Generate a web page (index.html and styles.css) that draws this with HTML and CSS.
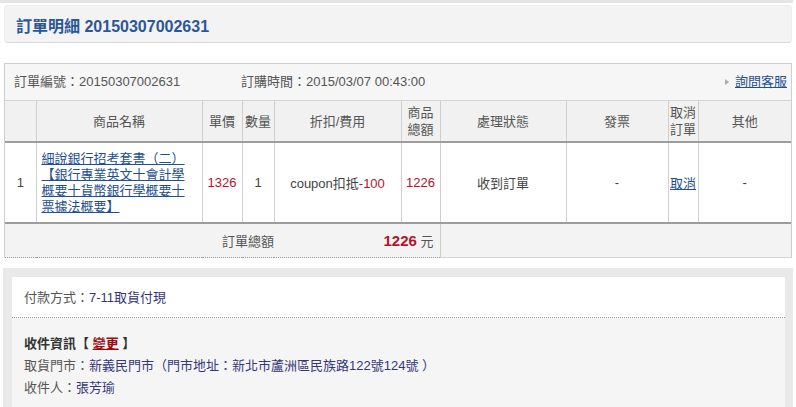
FILE: index.html
```html
<!DOCTYPE html>
<html>

<head>
    <meta name="viewport" content="width=device-width, initial-scale=1">
    <title>訂單明細</title>
    <link rel="stylesheet" href="styles.css">
</head>

<body>
    <div class="topbar"></div>
    <div class="page">
        <div class="title-box">
            <h1>訂單明細 20150307002631</h1>
        </div>

        <div class="order-box">
            <div class="order-info">
                <span>訂單編號：20150307002631</span>
                <span>訂購時間：2015/03/07 00:43:00</span>
                <a href="#" class="service"><i class="arrow"></i><u>詢問客服</u></a>
            </div>
            <table class="items">
                <colgroup>
                    <col style="width:31px">
                    <col style="width:166px">
                    <col style="width:40px">
                    <col style="width:32px">
                    <col style="width:127px">
                    <col style="width:39px">
                    <col style="width:126px">
                    <col style="width:102px">
                    <col style="width:30px">
                    <col>
                </colgroup>
                <thead>
                    <tr>
                        <th></th>
                        <th>商品名稱</th>
                        <th>單價</th>
                        <th>數量</th>
                        <th>折扣/費用</th>
                        <th>商品總額</th>
                        <th>處理狀態</th>
                        <th>發票</th>
                        <th>取消訂單</th>
                        <th>其他</th>
                    </tr>
                </thead>
                <tbody>
                    <tr class="item-row">
                        <td>1</td>
                        <td class="name"><a href="#">細說銀行招考套書（二）【銀行專業英文十會計學概要十貨幣銀行學概要十票據法概要】</a></td>
                        <td class="price">1326</td>
                        <td>1</td>
                        <td>coupon扣抵<span class="price">-100</span></td>
                        <td class="price">1226</td>
                        <td class="status">收到訂單</td>
                        <td class="dash">-</td>
                        <td><a href="#">取消</a></td>
                        <td class="dash">-</td>
                    </tr>
                    <tr class="total-row">
                        <td colspan="4" class="total-label">訂單總額</td>
                        <td colspan="2" class="total-sum"><b>1226</b> 元</td>
                        <td colspan="4" class="total-rest"></td>
                    </tr>
                </tbody>
            </table>
        </div>
    </div>

    <div class="pay-frame">
        <div class="pay-inner">
            <div class="pay-row">付款方式：<span class="value">7-11取貨付現</span></div>
            <div class="ship">
                <div class="ship-title">收件資訊【 <a href="#">變更</a> 】</div>
                <div>取貨門市：<span class="value">新義民門市（門市地址：新北市蘆洲區民族路122號124號 ）</span></div>
                <div>收件人：<span class="value">張芳瑜</span></div>
            </div>
        </div>
    </div>
</body>

</html>
```

FILE: styles.css
```css
body {
    margin: 0;
    font-family: "Liberation Sans", "Noto Sans CJK TC", sans-serif;
    font-size: 13px;
    color: #555;
    background: #fff;
    overflow: hidden;
}

a {
    color: #1f4f8f;
}

.topbar {
    height: 3px;
    width: 793px;
    background-color: #e4e4e4;
    margin-bottom: 2px;
}

.page {
    padding: 0 4px;
}

.title-box {
    background-color: #f3f3f3;
    border: 1px solid #ececec;
    border-bottom-color: #d8d8d8;
    border-radius: 4px;
    padding: 13px 11px 7px;
}

.title-box h1 {
    margin: 0;
    font-size: 16px;
    line-height: 16px;
    color: #2b5796;
    font-weight: bold;
}

.order-box {
    margin-top: 20px;
    border: 1px solid #cfcfcf;
    border-bottom: none;
}

.order-info {
    display: grid;
    grid-template-columns: 227px 1fr auto;
    height: 36px;
    line-height: 36px;
    padding: 0 4px 0 9px;
    background-color: #f6f6f6;
    border-bottom: 1px solid #d4d4d4;
}

.service {
    display: flex;
    align-items: center;
    gap: 6px;
}

.arrow {
    width: 0;
    height: 0;
    border-top: 3px solid transparent;
    border-bottom: 3px solid transparent;
    border-left: 4px solid #aaa;
}

.items {
    width: 100%;
    table-layout: fixed;
    border-collapse: collapse;
    text-align: center;
}

.items th {
    background-color: #f1f1f1;
    font-weight: normal;
    height: 40px;
    line-height: 17px;
    padding: 0;
    border-left: 1px solid #cfcfcf;
    border-bottom: 2px solid #9d9d9d;
}

.items td {
    border-left: 1px solid #cfcfcf;
    padding: 0 1px;
}

.items th:first-child,
.items td:first-child {
    border-left: none;
}

.item-row td {
    height: 79px;
    color: #444;
    border-bottom: 2px solid #9d9d9d;
}

.item-row .name {
    text-align: left;
    line-height: 16px;
    padding: 0 8px 0 5px;
}

.item-row .name a {
    color: #1f4f8f;
}

.price {
    color: #b3132b;
}

.item-row .price {
    color: #b3132b;
}

.dash {
    color: #999;
}

.total-row td {
    height: 33px;
    background-color: #f3f3f3;
    border-bottom: 1px solid #d4d4d4;
}

.total-row .total-label {
    text-align: right;
    padding-right: 0;
    border-bottom: 1px dotted #999;
}

.total-row .total-sum {
    text-align: right;
    padding-right: 6px;
    border-left: none;
    border-bottom: 1px dotted #999;
}

.total-sum b {
    color: #b3132b;
    font-size: 15px;
}

.pay-frame {
    margin: 10px 3px 0 3px;
    padding: 9px 8px 0 9px;
    background-color: #e9e9e9;
}

.pay-inner {
    background-color: #fff;
}

.pay-row {
    height: 40px;
    line-height: 42px;
    padding-left: 12px;
    border-bottom: 1px dotted #999;
}

.value {
    color: #35357a;
}

.ship {
    background-color: #f5f5f5;
    padding: 15px 12px 8px;
    line-height: 22px;
    border-bottom: 1px dotted #999;
}

.ship-title {
    font-weight: bold;
    color: #333;
}

.ship-title a {
    color: #9a0c0c;
}
```
